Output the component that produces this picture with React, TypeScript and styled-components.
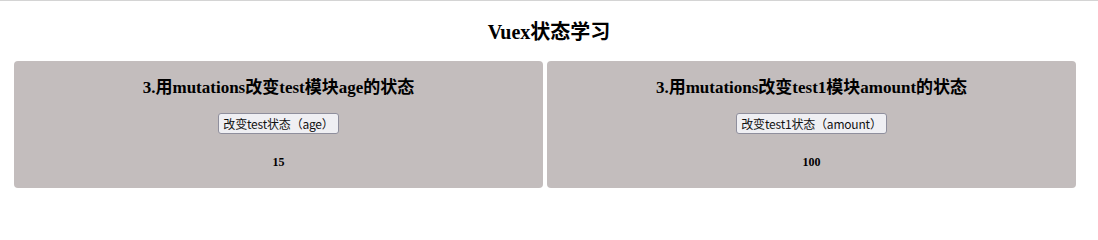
import React, { useState } from "react";
import styled, { createGlobalStyle } from "styled-components";

const Global = createGlobalStyle`
  html, body { margin: 0; padding: 0; background: #fff; }
  body { font-family: "Liberation Serif", "Noto Sans CJK SC", serif; color: #000; }
`;

const Page = styled.div`
  border-top: 1px solid #d4d4d4;
  display: flex;
  flex-direction: column;
`;

const Title = styled.h2`
  margin: 0;
  padding-top: 19px;
  height: 42px;
  box-sizing: border-box;
  text-align: center;
  font-size: 20px;
  line-height: 24px;
  font-weight: bold;
  font-family: "Liberation Serif", "Noto Sans CJK SC", serif;
`;

const Row = styled.div`
  display: flex;
  gap: 4px;
  padding: 18px 0 0 14px;
`;

const Card = styled.section`
  width: 529px;
  height: 127px;
  box-sizing: border-box;
  background: #c3bdbd;
  border-radius: 4px;
  display: flex;
  flex-direction: column;
  align-items: center;
  padding-top: 17px;
`;

const Heading = styled.h3`
  margin: 0;
  font-size: 17px;
  line-height: 20px;
  font-weight: bold;
  font-family: "Liberation Serif", "Noto Sans CJK SC", serif;
`;

const Button = styled.button`
  margin-top: 15px;
  height: 21px;
  padding: 0 4px;
  box-sizing: border-box;
  background: #efeff3;
  border: 1px solid #8f8f9d;
  border-radius: 3px;
  font-family: "Noto Sans CJK SC", "Noto Sans", sans-serif;
  font-size: 12px;
  letter-spacing: -0.2px;
  line-height: 17px;
  color: #111;
  cursor: pointer;
`;

const Value = styled.div`
  margin-top: 21px;
  font-size: 12px;
  line-height: 14px;
  font-weight: bold;
  font-family: "Liberation Serif", serif;
`;

export default function App() {
  const [age, setAge] = useState(15);
  const [amount, setAmount] = useState(100);
  return (
    <>
      <Global />
      <Page>
        <Title>Vuex状态学习</Title>
        <Row>
          <Card>
            <Heading>3.用mutations改变test模块age的状态</Heading>
            <Button onClick={() => setAge(age + 1)}>改变test状态（age）</Button>
            <Value>{age}</Value>
          </Card>
          <Card>
            <Heading>3.用mutations改变test1模块amount的状态</Heading>
            <Button onClick={() => setAmount(amount + 1)}>改变test1状态（amount）</Button>
            <Value>{amount}</Value>
          </Card>
        </Row>
      </Page>
    </>
  );
}
